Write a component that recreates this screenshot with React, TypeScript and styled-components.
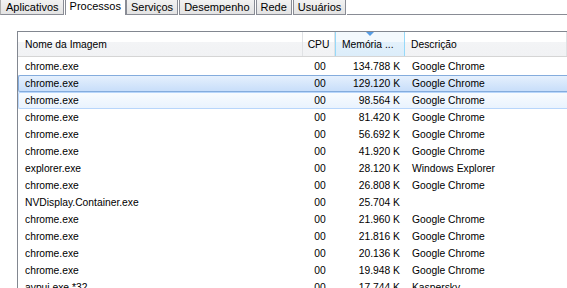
import React from 'react'
import { createGlobalStyle, styled } from 'styled-components'

interface Proc {
    name: string
    cpu: string
    mem: string
    desc: string
}

const procs: Proc[] = [
    { name: 'chrome.exe', cpu: '00', mem: '134.788 K', desc: 'Google Chrome' },
    { name: 'chrome.exe', cpu: '00', mem: '129.120 K', desc: 'Google Chrome' },
    { name: 'chrome.exe', cpu: '00', mem: '98.564 K', desc: 'Google Chrome' },
    { name: 'chrome.exe', cpu: '00', mem: '81.420 K', desc: 'Google Chrome' },
    { name: 'chrome.exe', cpu: '00', mem: '56.692 K', desc: 'Google Chrome' },
    { name: 'chrome.exe', cpu: '00', mem: '41.920 K', desc: 'Google Chrome' },
    { name: 'explorer.exe', cpu: '00', mem: '28.120 K', desc: 'Windows Explorer' },
    { name: 'chrome.exe', cpu: '00', mem: '26.808 K', desc: 'Google Chrome' },
    { name: 'NVDisplay.Container.exe', cpu: '00', mem: '25.704 K', desc: '' },
    { name: 'chrome.exe', cpu: '00', mem: '21.960 K', desc: 'Google Chrome' },
    { name: 'chrome.exe', cpu: '00', mem: '21.816 K', desc: 'Google Chrome' },
    { name: 'chrome.exe', cpu: '00', mem: '20.136 K', desc: 'Google Chrome' },
    { name: 'chrome.exe', cpu: '00', mem: '19.948 K', desc: 'Google Chrome' },
    { name: 'avpui.exe *32', cpu: '00', mem: '17.744 K', desc: 'Kaspersky' },
]

const tabs = ['Aplicativos', 'Processos', 'Serviços', 'Desempenho', 'Rede', 'Usuários']

const COLS = '285px 32px 70px 1fr'

const App: React.FC = () => {
    return (
        <>
            <GlobalStyle />
            <Window>
                <TabStrip>
                    {tabs.map((t) => (
                        <Tab key={t} $active={t === 'Processos'}>
                            {t}
                        </Tab>
                    ))}
                    <TabFill />
                </TabStrip>
                <Content>
                    <ListView>
                        <Header>
                            <HeadCell>Nome da Imagem</HeadCell>
                            <HeadCell $align="center">CPU</HeadCell>
                            <HeadCell $sorted>
                                <SortArrow />
                                Memória ...
                            </HeadCell>
                            <HeadCell>Descrição</HeadCell>
                        </Header>
                        {procs.map((p, i) => (
                            <Row
                                key={i}
                                $state={i === 1 ? 'selected' : i === 2 ? 'hot' : 'normal'}
                            >
                                <Cell>{p.name}</Cell>
                                <Cell $align="center">{p.cpu}</Cell>
                                <Cell $align="right">{p.mem}</Cell>
                                <Cell>{p.desc}</Cell>
                            </Row>
                        ))}
                    </ListView>
                </Content>
            </Window>
        </>
    )
}

export default App

const GlobalStyle = createGlobalStyle`
    html, body {
        margin: 0;
        padding: 0;
        background: #fff;
        overflow: hidden;
    }
    body {
        font-family: "Liberation Sans", Arial, sans-serif;
        font-size: 10.3px;
        color: #000;
    }
`

const Window = styled.div`
    width: 567px;
    height: 288px;
    overflow: hidden;
    background: #fff;
`

const TabStrip = styled.div`
    display: flex;
    height: 15px;
    align-items: stretch;
`

const Tab = styled.div<{ $active?: boolean }>`
    display: flex;
    align-items: center;
    box-sizing: border-box;
    padding: 0 4px 1px;
    margin-right: ${(p) => (p.$active ? '0' : '1px')};
    font-size: 11px;
    color: #000;
    border: 1px solid #898c95;
    border-top: none;
    border-bottom: ${(p) => (p.$active ? 'none' : '1px solid #898c95')};
    background: ${(p) => (p.$active ? '#fff' : 'linear-gradient(#f2f2f2, #e3e3e3)')};
    position: relative;
    top: ${(p) => (p.$active ? '-2px' : '0')};
    height: ${(p) => (p.$active ? '17px' : 'auto')};
    &:first-child {
        padding-left: 5px;
        border-left-color: #b0b0b0;
    }
`

const TabFill = styled.div`
    flex: 1;
    border-bottom: 1px solid #898c95;
`

const Content = styled.div`
    padding: 16px 0 0 17px;
`

const ListView = styled.div`
    border-top: 1px solid #828790;
    border-left: 1px solid #828790;
`

const Header = styled.div`
    display: grid;
    grid-template-columns: ${COLS};
    height: 24px;
    margin-bottom: 1px;
    background: linear-gradient(#fff 0%, #fff 40%, #f3f4f6 41%, #f1f2f4 100%);
    border-bottom: 1px solid #d5d5d5;
`

const HeadCell = styled.div<{ $align?: string; $sorted?: boolean }>`
    position: relative;
    display: flex;
    align-items: center;
    justify-content: ${(p) => (p.$align === 'center' ? 'center' : 'flex-start')};
    padding: 0 6px;
    white-space: nowrap;
    overflow: hidden;
    border-right: 1px solid ${(p) => (p.$sorted ? '#96d9f9' : '#e0e2e5')};
    border-left: ${(p) => (p.$sorted ? '1px solid #96d9f9' : 'none')};
    background: ${(p) =>
        p.$sorted
            ? 'linear-gradient(#f3f9fd 0%, #f3f9fd 40%, #e3f1fb 41%, #dcedfa 100%)'
            : 'transparent'};
    &:first-child {
        padding-left: 7px;
    }
`

const SortArrow = styled.span`
    position: absolute;
    top: 0;
    left: 50%;
    margin-left: -4px;
    width: 0;
    height: 0;
    border-left: 4px solid transparent;
    border-right: 4px solid transparent;
    border-top: 4px solid #569de5;
`

const Row = styled.div<{ $state: 'selected' | 'hot' | 'normal' }>`
    display: grid;
    grid-template-columns: ${COLS};
    height: 17px;
    box-sizing: border-box;
    border: 1px solid
        ${(p) =>
            p.$state === 'selected' ? '#84acdd' : p.$state === 'hot' ? '#b8d6fb' : 'transparent'};
    border-right: none;
    border-radius: 2px 0 0 2px;
    background: ${(p) =>
        p.$state === 'selected'
            ? 'linear-gradient(#e5f0fd, #c8defa)'
            : p.$state === 'hot'
            ? 'linear-gradient(#f8fbfe, #e9f3fe)'
            : 'transparent'};
`

const Cell = styled.div<{ $align?: string }>`
    display: flex;
    align-items: center;
    justify-content: ${(p) =>
        p.$align === 'center' ? 'center' : p.$align === 'right' ? 'flex-end' : 'flex-start'};
    padding: 0 6px;
    white-space: nowrap;
    overflow: hidden;
`
